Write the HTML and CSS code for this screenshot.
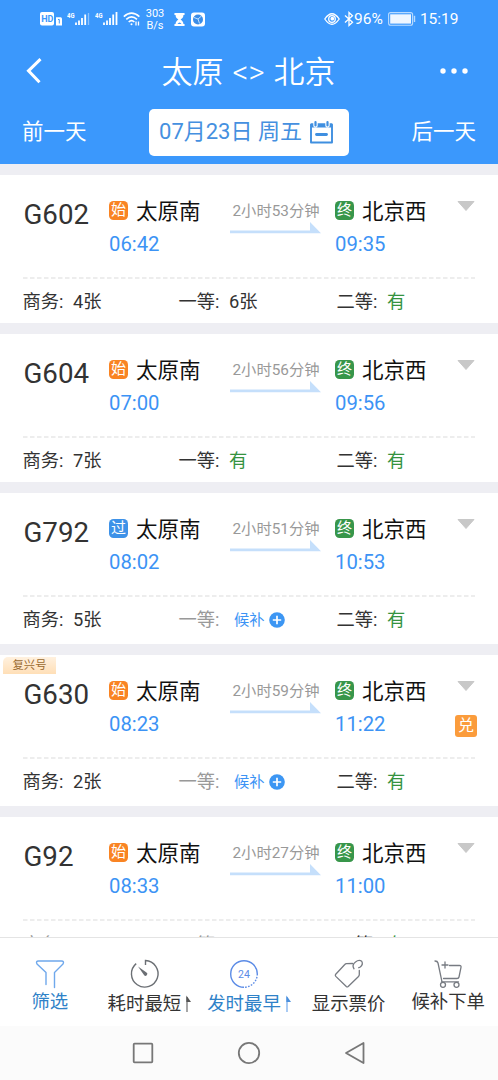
FILE: index.html
```html
<!DOCTYPE html>
<html lang="zh-CN">
<head>
<meta charset="utf-8">
<title>太原 - 北京</title>
<link rel="stylesheet" href="styles.css">
</head>
<body>
<svg class="defs" width="0" height="0">
  <symbol id="signal" viewBox="0 0 24 16"><text x="0" y="6.500" textLength="7.500" lengthAdjust="spacingAndGlyphs" class="net">4G</text><path d="M9 14v-2.500M12 14V9.500M15 14V7M18.200 14V3.500" stroke="#fff" stroke-width="1.8"/></symbol>
  <symbol id="arrow" viewBox="0 0 91 12"><path d="M0 8.500H80V0L91 11.200H0Z" fill="#c5dffb"/></symbol>
  <symbol id="caret" viewBox="0 0 18 10"><path d="M1 .5H17L9 9.500Z" fill="#c8c8c8" stroke="#c8c8c8" stroke-linejoin="round"/></symbol>
  <symbol id="plus" viewBox="0 0 16 16"><circle cx="8" cy="8" r="7.800" fill="#3c96f3"/><path d="M8 3.800v8.400M3.800 8h8.400" stroke="#fff" stroke-width="1.700"/></symbol>
</svg>
<div class="phone">
  <header class="header">
    <div class="status">
      <div class="status-left">
        <svg width="24" height="16" viewBox="0 0 24 16"><rect x="0" y="1" width="14" height="13.500" rx="2" fill="#fff"/><text x="1.200" y="11" class="hd">HD</text><path d="M16 6.200h5l1 1V14.500H16Z" fill="#fff"/><path d="M18 8.500h1.300V12.500" fill="none" stroke="#3b98fc" stroke-width="1"/></svg>
        <svg class="sig1" width="24" height="16"><use href="#signal"/><path d="M21.500 14V2" stroke="#8cc2fd" stroke-width="1.300"/></svg>
        <svg class="sig2" width="24" height="16"><use href="#signal"/><path d="M21.500 14V1" stroke="#fff" stroke-width="1.800"/></svg>
        <svg class="wifi" width="18" height="16" viewBox="0 0 18 16" fill="none" stroke="#fff" stroke-width="1.600"><path d="M.8 5.600Q8.500-1.400 16.400 5.600M3.300 8.300Q8.500 3.500 14 8.300M5.700 11Q8.500 8.300 11.400 11"/><circle cx="8.500" cy="13.200" r="1" fill="#fff" stroke="none"/><path d="M13 10.500v4M15.500 10.500v4" stroke-width="1.300"/></svg>
        <div class="speed">303<br>B/s</div>
        <svg class="glass" width="11" height="15" viewBox="0 0 12 16"><path d="M.5 1H11.500V3H10.300C10.300 6 8.500 7 7.200 8C8.500 9 10.300 10.500 10.300 13H11.500V15H.5V13H1.700C1.700 10.500 3.500 9 4.800 8C3.500 7 1.700 6 1.700 3H.5Z" fill="#fff"/><path d="M3.800 13Q6 9.500 8.200 13Z" fill="#3b98fc"/></svg>
        <svg class="app" width="14" height="15" viewBox="0 0 14 15"><rect y=".5" width="14" height="14" rx="3" fill="#fff"/><circle cx="7" cy="7.500" r="5" fill="#3b8de8"/><path d="M3 5.500L7 7L10.500 4M7 7L8.500 11.500" stroke="#bfe0ff" stroke-width="1" fill="none"/></svg>
      </div>
      <div class="status-right">
        <svg width="16" height="14" viewBox="0 0 16 14" fill="none" stroke="#fff" stroke-width="1.300"><path d="M.8 7Q8-3.500 15.200 7Q8 17.500 .8 7Z"/><circle cx="8" cy="7" r="3.300"/><circle cx="8.300" cy="6.700" r="1.200" fill="#fff"/></svg>
        <svg class="bt" width="10" height="16" viewBox="0 0 10 16" fill="none" stroke="#fff" stroke-width="1.300"><path d="M1 4.500L8.500 11.300L5 14.500V1.500L8.500 4.700L1 11.500"/></svg>
        <span>96%</span>
        <svg class="battery" width="28" height="14" viewBox="0 0 28 14"><rect x=".6" y=".6" width="24" height="12.600" rx="2" fill="none" stroke="#b9dbff" stroke-width="1.100"/><rect x="2.200" y="2.300" width="20.800" height="9.300" fill="#eef6ff"/><path d="M26.500 3.800v6.200" stroke="#b9dbff" stroke-width="1.400"/></svg>
        <span>15:19</span>
      </div>
    </div>
    <div class="titlebar">
      <svg width="18" height="26" viewBox="0 0 18 26"><path d="M15.500 1.200L3.500 12.800L14.500 24.200" fill="none" stroke="#fff" stroke-width="3"/></svg>
      <h1 class="title">太原 &lt;&gt; 北京</h1>
      <svg width="30" height="8" viewBox="0 0 30 8" fill="#fff"><circle cx="4" cy="4" r="2.700"/><circle cx="15" cy="4" r="2.700"/><circle cx="26" cy="4" r="2.700"/></svg>
    </div>
    <div class="dates">
      <span>前一天</span>
      <div class="date"><span>07月23日 周五</span>
        <svg width="25" height="25" viewBox="0 0 25 25" fill="none" stroke="#3f8fe0"><path d="M2 4.500H23V22.500H2Z" stroke-width="1.900" stroke-linejoin="round"/><path d="M2 3.500H23V7.500H2Z" fill="#3f8fe0" stroke="none"/><path d="M6.500 2V5.500M18.500 2V5.500" stroke="#fff" stroke-width="4.400" stroke-linecap="round"/><path d="M6.500 2V5.500M18.500 2V5.500" stroke-width="2.200" stroke-linecap="round"/><path d="M7.500 14.500H17.500" stroke-width="2.800" stroke-linecap="round"/></svg>
      </div>
      <span>后一天</span>
    </div>
  </header>

  <main class="list">
    <article class="card">
      <div class="trip">
        <div class="train">G602</div>
        <div class="stop"><div class="station"><i class="badge start">始</i>太原南</div><div class="time">06:42</div></div>
        <div class="duration">2小时53分钟<svg width="91" height="12"><use href="#arrow"/></svg></div>
        <div class="stop"><div class="station"><i class="badge end">终</i>北京西</div><div class="time">09:35</div></div>
        <div class="side"><svg width="18" height="10"><use href="#caret"/></svg></div>
      </div>
      <svg class="dash" width="452" height="2"><path d="M0 1H452"/></svg>
      <div class="seats"><div>商务:<span>4张</span></div><div>一等:<span>6张</span></div><div>二等:<span class="yes">有</span></div></div>
    </article>
    <article class="card">
      <div class="trip">
        <div class="train">G604</div>
        <div class="stop"><div class="station"><i class="badge start">始</i>太原南</div><div class="time">07:00</div></div>
        <div class="duration">2小时56分钟<svg width="91" height="12"><use href="#arrow"/></svg></div>
        <div class="stop"><div class="station"><i class="badge end">终</i>北京西</div><div class="time">09:56</div></div>
        <div class="side"><svg width="18" height="10"><use href="#caret"/></svg></div>
      </div>
      <svg class="dash" width="452" height="2"><path d="M0 1H452"/></svg>
      <div class="seats"><div>商务:<span>7张</span></div><div>一等:<span class="yes">有</span></div><div>二等:<span class="yes">有</span></div></div>
    </article>
    <article class="card tall">
      <div class="trip">
        <div class="train">G792</div>
        <div class="stop"><div class="station"><i class="badge pass">过</i>太原南</div><div class="time">08:02</div></div>
        <div class="duration">2小时51分钟<svg width="91" height="12"><use href="#arrow"/></svg></div>
        <div class="stop"><div class="station"><i class="badge end">终</i>北京西</div><div class="time">10:53</div></div>
        <div class="side"><svg width="18" height="10"><use href="#caret"/></svg></div>
      </div>
      <svg class="dash" width="452" height="2"><path d="M0 1H452"/></svg>
      <div class="seats"><div>商务:<span>5张</span></div><div class="none">一等:<span class="wait">候补<svg width="16" height="16"><use href="#plus"/></svg></span></div><div>二等:<span class="yes">有</span></div></div>
    </article>
    <article class="card tall">
      <div class="ribbon">复兴号</div>
      <div class="trip">
        <div class="train">G630</div>
        <div class="stop"><div class="station"><i class="badge start">始</i>太原南</div><div class="time">08:23</div></div>
        <div class="duration">2小时59分钟<svg width="91" height="12"><use href="#arrow"/></svg></div>
        <div class="stop"><div class="station"><i class="badge end">终</i>北京西</div><div class="time">11:22</div></div>
        <div class="side"><svg width="18" height="10"><use href="#caret"/></svg><i class="redeem">兑</i></div>
      </div>
      <svg class="dash" width="452" height="2"><path d="M0 1H452"/></svg>
      <div class="seats"><div>商务:<span>2张</span></div><div class="none">一等:<span class="wait">候补<svg width="16" height="16"><use href="#plus"/></svg></span></div><div>二等:<span class="yes">有</span></div></div>
    </article>
    <article class="card tall">
      <div class="trip">
        <div class="train">G92</div>
        <div class="stop"><div class="station"><i class="badge start">始</i>太原南</div><div class="time">08:33</div></div>
        <div class="duration">2小时27分钟<svg width="91" height="12"><use href="#arrow"/></svg></div>
        <div class="stop"><div class="station"><i class="badge end">终</i>北京西</div><div class="time">11:00</div></div>
        <div class="side"><svg width="18" height="10"><use href="#caret"/></svg></div>
      </div>
      <svg class="dash" width="452" height="2"><path d="M0 1H452"/></svg>
      <div class="seats last"><div class="none">商务:<span class="wait">候补<svg width="16" height="16"><use href="#plus"/></svg></span></div><div class="none">一等:<span class="wait">候补<svg width="16" height="16"><use href="#plus"/></svg></span></div><div>二等:<span class="yes">有</span></div></div>
    </article>
  </main>

  <nav class="tabs">
    <div class="tab blue">
      <svg width="30" height="30" viewBox="0 0 30 30" fill="none" stroke="#6fa8ec" stroke-width="1.400" stroke-linejoin="round" stroke-linecap="round"><path d="M11 25.500V13.500L2 5Q.5 2 3.500 2H26.500Q29.500 2 28 5L19.500 13.500V28.500"/></svg>
      <div class="label">筛选</div>
    </div>
    <div class="tab low shift">
      <svg width="30" height="30" viewBox="0 0 30 30" fill="none" stroke="#6b6f74" stroke-width="1.400"><path d="M15.500 6V1.500A13.300 13.300 0 1 1 6.200 4.600"/><path d="M8 7.500L16.500 13.500A1.800 1.800 0 1 1 14 16Z" fill="#6b6f74" stroke="none"/></svg>
      <div class="label">耗时最短<svg width="5" height="17" viewBox="0 0 5 17"><path d="M1 17V2" stroke="#777" stroke-width="1.300"/><path d="M.4 .5L5 7H.4Z" fill="#555"/></svg></div>
    </div>
    <div class="tab low shift blue">
      <svg width="30" height="30" viewBox="0 0 30 30" fill="none" stroke="#5b8be6" stroke-width="1.400"><path d="M15 28.300A13.300 13.300 0 1 1 28.300 15"/><path d="M28.300 15A13.300 13.300 0 0 1 15 28.300" stroke-dasharray="1.600 1.400"/><text x="15" y="18.800" class="n24">24</text></svg>
      <div class="label">发时最早<svg width="5" height="17" viewBox="0 0 5 17"><path d="M1 17V2" stroke="#7cb0ee" stroke-width="1.300"/><path d="M.4 .5L5 7H.4Z" fill="#4b90dd"/></svg></div>
    </div>
    <div class="tab low">
      <svg width="30" height="30" viewBox="0 0 30 30" fill="none" stroke="#777b82" stroke-width="1.300" stroke-linejoin="round" stroke-linecap="round"><path d="M18.500 4.500L12.500 4.600Q11.500 4.700 10.800 5.500L1.500 15.500Q1 16.500 1.800 17.400L12.300 27.500Q13.200 28.300 14.200 27.500L24.500 17.500Q25.300 16.600 25.300 15.500V11.500"/><path d="M20 9.800Q17.500 6 21.500 3Q25 .2 27.700 2.300Q29.500 5.500 26.300 8L24.800 8.700"/></svg>
      <div class="label">显示票价</div>
    </div>
    <div class="tab">
      <svg width="30" height="30" viewBox="0 0 30 30" fill="none" stroke="#777b82" stroke-width="1.300" stroke-linecap="round" stroke-linejoin="round"><path d="M2 2Q4.500 2 5 4L9 22.800M16.500 6.500H26.500Q28.300 6.500 28 8.300L26 18Q25.700 19.500 24 19.500H10.500M8.500 22.800H25.500M9 6H15M12 3V9"/><circle cx="10" cy="25.800" r="2.500"/><circle cx="23.500" cy="25.800" r="2.500"/></svg>
      <div class="label">候补下单</div>
    </div>
  </nav>
  <footer class="system">
    <svg width="22" height="22" viewBox="0 0 22 22"><rect x="1.700" y="1.700" width="18.600" height="18.600" rx=".8"/></svg>
    <svg width="24" height="24" viewBox="0 0 24 24"><circle cx="12" cy="12" r="10.200"/></svg>
    <svg width="22" height="24" viewBox="0 0 22 24"><path d="M19.500 2V22L2 12Z" stroke-linejoin="round"/></svg>
  </footer>
</div>
</body>
</html>
```
FILE: styles.css
```css
* { box-sizing: border-box; }
body { margin: 0; background: #fff; font-family: Roboto, "Noto Sans CJK SC", sans-serif; font-weight: 400; color: #333; }
svg { display: block; flex: none; overflow: visible; }
i { font-style: normal; }
.defs { position: absolute; }
.phone { width: 498px; height: 1080px; display: flex; flex-direction: column; overflow: hidden; }

.header { height: 163.5px; flex: none; background: #3b98fc; color: #fff; }
.status { height: 38px; display: flex; justify-content: space-between; padding: 0 39.5px 0 40px; }
.status-left, .status-right { display: flex; align-items: center; }
.net { font-size: 7.5px; font-weight: 700; fill: #fff; }
.hd { font-size: 9px; font-weight: 700; fill: #3b98fc; }
.sig1 { margin-left: 3px; }
.sig2 { margin-left: 4px; }
.wifi { margin-left: 4px; }
.speed { width: 22px; margin-left: 3px; font-size: 11px; line-height: 12px; padding-top: 1px; text-align: center; }
.glass { margin-left: 8px; }
.app { margin-left: 6px; }
.status-right { font-size: 15.5px; }
.bt { margin: 0 0 0 4px; }
.battery { margin: 0 4px 0 5px; }
.titlebar { height: 66px; display: flex; align-items: center; justify-content: space-between; padding: 0 29px 0 25px; }
.title { margin: 3px 0 0 15px; font-size: 31px; font-weight: 350; line-height: 40px; word-spacing: 1.5px; }
.dates { height: 54px; display: flex; align-items: center; justify-content: space-between; padding: 0 22px; font-size: 21.5px; }
.dates > span { line-height: 28px; margin-top: 2px; }
.date { width: 200px; height: 47px; margin-top: 3px; border-radius: 5px; background: #fff; color: #4590e0; display: flex; align-items: center; justify-content: center; gap: 7px; padding-right: 5px; font-size: 22px; }
.date span { line-height: 28px; margin-top: -1px; }

.list { flex: 1; min-height: 0; overflow: hidden; background: #eeeef3; padding-top: 11.500px; display: flex; flex-direction: column; gap: 11px; }
.card { height: 147.800px; flex: none; background: #fff; padding: 0 23px; position: relative; }
.card.tall { height: 151px; }
.trip { height: 102px; padding-top: 24px; display: grid; grid-template-columns: 86px 121px 105px 122px 18px; }
.train { padding-left: .5px; font-size: 27.700px; line-height: 32px; }
.station { display: flex; align-items: center; height: 24px; font-size: 21.5px; line-height: 24px; padding-top: 2px; color: #111; }
.badge { width: 19px; height: 19px; margin: -3px 8px 0 0; border-radius: 4.500px; color: #fff; font-size: 15px; line-height: 19px; text-align: center; }
.start { background: #f98423; }
.pass { background: #3e92e8; }
.end { background: #38964a; }
.time { margin-top: 9px; font-size: 20.300px; line-height: 24px; color: #3c93f5; }
.duration { width: 91px; padding: 1px 0 0 1px; font-size: 15.300px; line-height: 23px; color: #999; text-align: center; white-space: nowrap; }
.duration svg { margin: -1px 0 0 -1px; }
.side { padding-top: 2px; display: flex; flex-direction: column; align-items: center; }
.redeem { width: 22px; height: 22px; flex: none; margin-top: 24px; border-radius: 3px; background: #fb9c3c; color: #fff; font-size: 16px; line-height: 22px; text-align: center; }
.dash { fill: none; stroke: #e7e7e7; stroke-width: 1.500px; stroke-dasharray: 4.500px 2.500px; }
.seats { height: 43px; padding-top: 1px; display: grid; grid-template-columns: 156px 158px 1fr; font-size: 18.300px; line-height: 43px; margin-left: -.5px; }
.seats > div { display: flex; align-items: center; }
.seats span { margin-left: 9.5px; }
.seats .none { color: #999; }
.seats .yes { color: #359340; }
.seats .wait { margin-left: 14.5px; font-size: 15.300px; color: #3c93f5; display: flex; align-items: center; gap: 4px; padding-top: 1px; }
.seats.last { padding-top: 2px; }
.ribbon { position: absolute; left: 3px; top: 2px; width: 53px; height: 17px; border-radius: 5px 0 0 0; background: linear-gradient(#fff1df, #ffdfb7); color: #9a6a30; font-size: 11.300px; line-height: 18px; text-align: center; }

.tabs { height: 89.500px; flex: none; border-top: 1.500px solid #e4e4e4; background: #fff; display: grid; grid-template-columns: repeat(5, 1fr); }
.tab { padding-top: 21px; display: flex; flex-direction: column; align-items: center; }
.label { display: flex; align-items: center; gap: 5px; margin-top: 1px; font-size: 18.400px; line-height: 24px; white-space: nowrap; }
.low .label { margin-top: 3px; }
.shift > svg { margin-right: 9px; }
.blue .label { color: #2f82c8; }
.n24 { font-size: 10.500px; text-anchor: middle; fill: #5b8be6; stroke: none; }
.system { height: 54px; flex: none; background: #fbfbfb; display: flex; align-items: center; justify-content: center; gap: 83px; fill: none; stroke: #777; stroke-width: 1.800px; }
```
